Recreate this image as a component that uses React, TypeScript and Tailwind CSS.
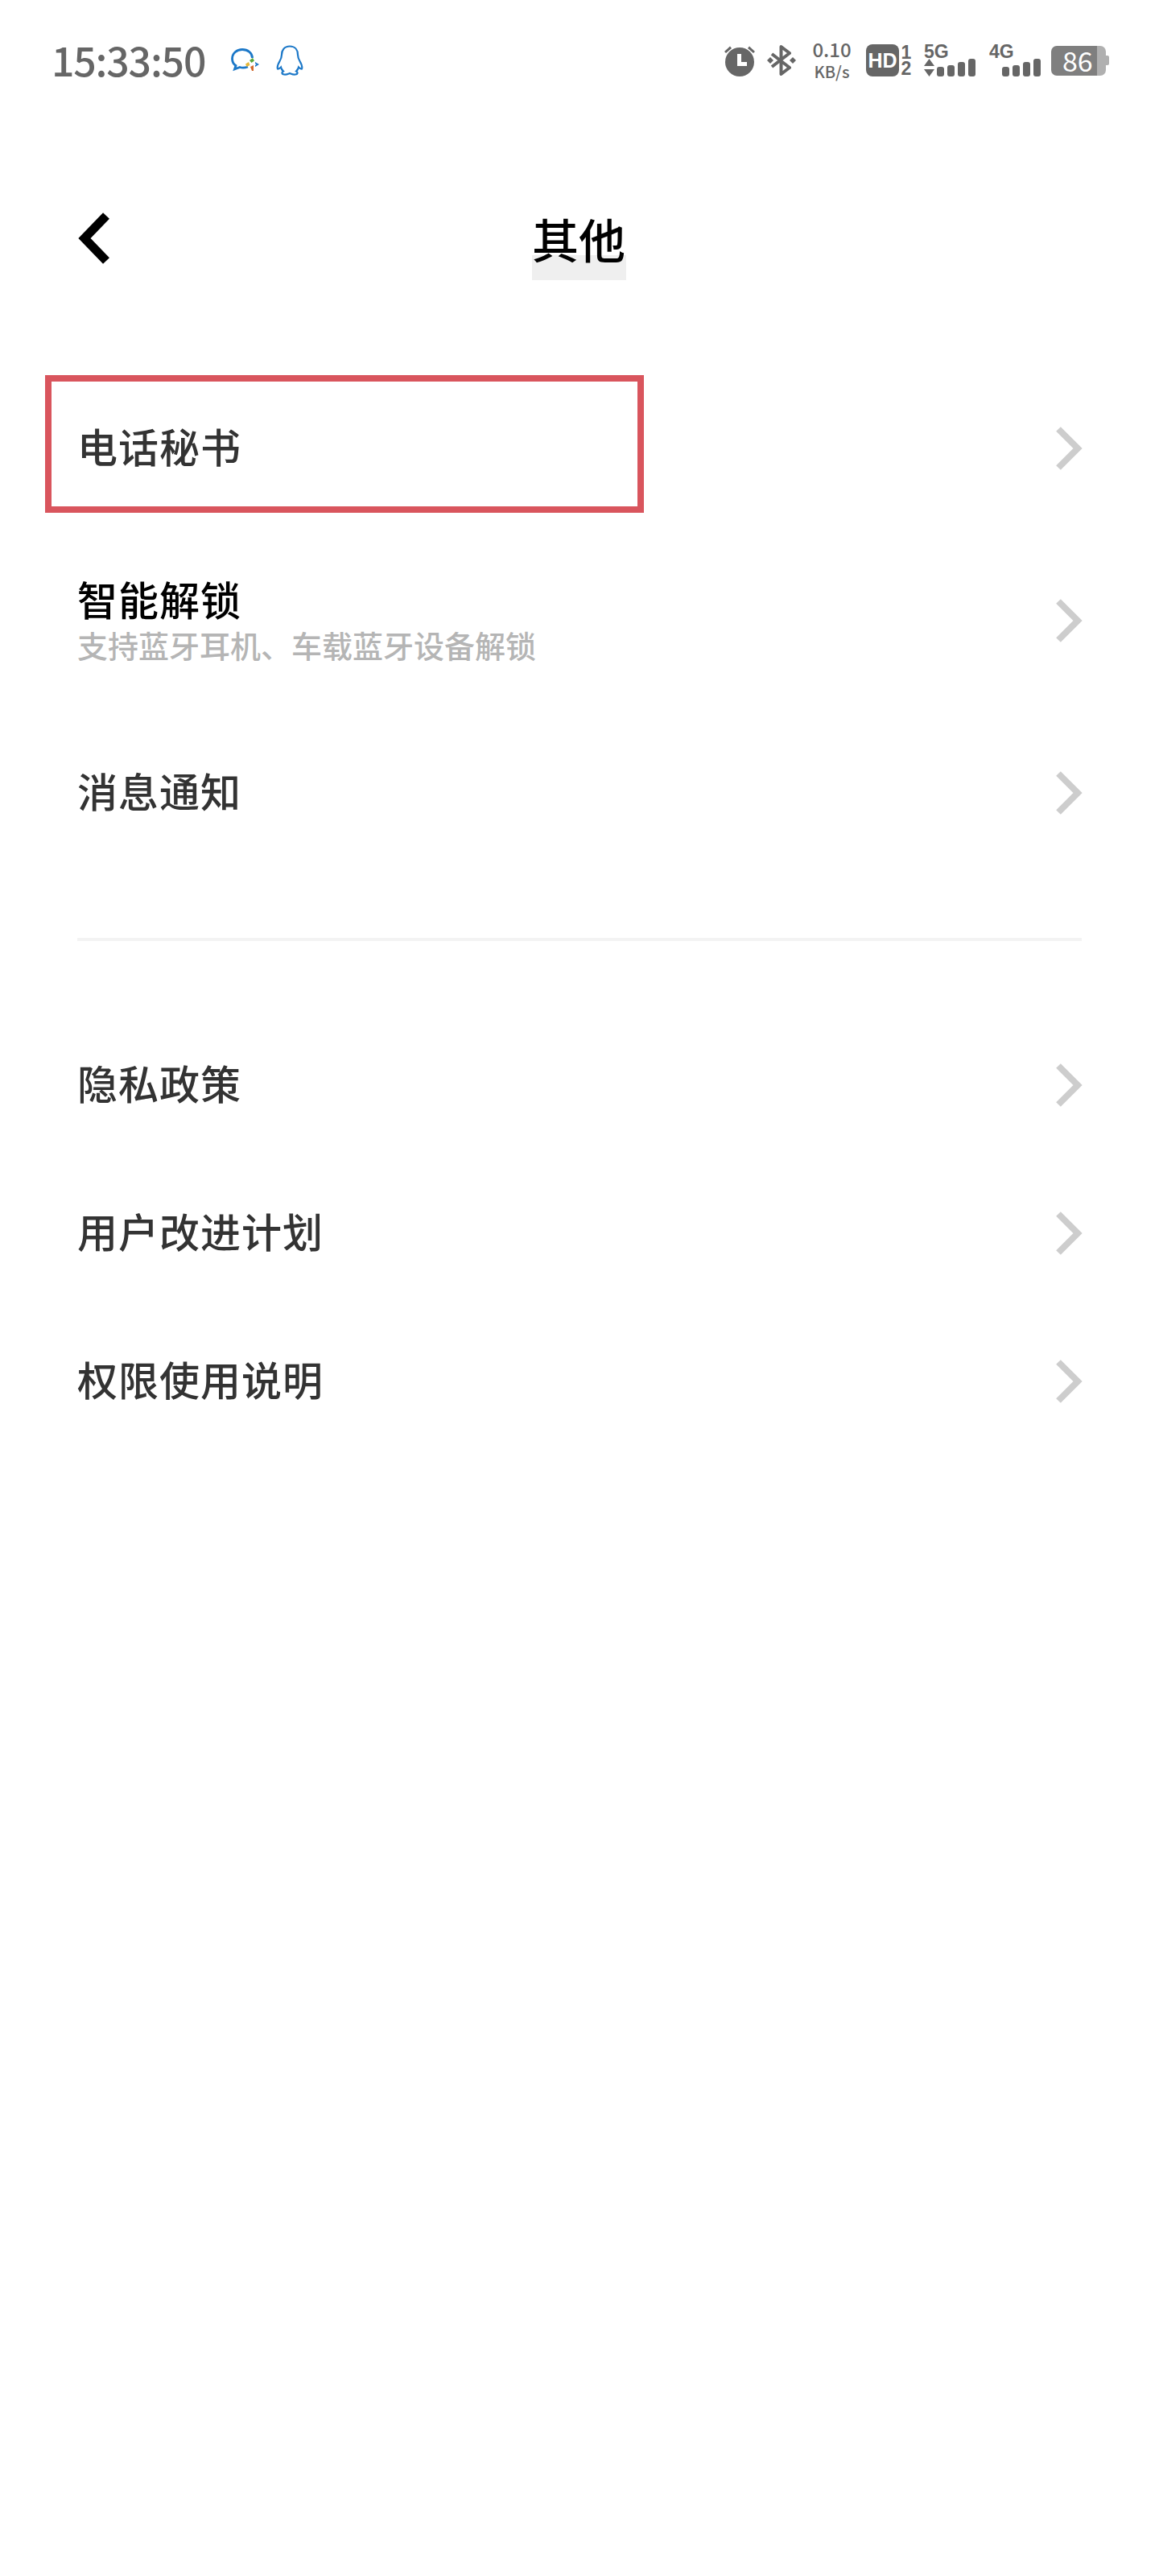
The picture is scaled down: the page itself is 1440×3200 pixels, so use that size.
import React from "react";

const cjk = "font-['Noto_Sans_CJK_SC','Noto_Sans',sans-serif]";

function Chevron() {
  return (
    <svg width="36" height="56" viewBox="0 0 36 56" className="shrink-0 relative top-[2px]" fill="none">
      <path d="M5 4 L29 28 L5 52" stroke="#cdcdcd" strokeWidth="8" />
    </svg>
  );
}

function Bars() {
  return (
    <div className="flex items-end gap-[4px]">
      <div className="w-[9px] h-[12px] rounded-[3px] bg-[#666]" />
      <div className="w-[9px] h-[14px] rounded-[3px] bg-[#666]" />
      <div className="w-[9px] h-[18px] rounded-[3px] bg-[#666]" />
      <div className="w-[9px] h-[22px] rounded-[3px] bg-[#666]" />
    </div>
  );
}

function Row({ title, sub, h, box, dark }: { title: string; sub?: string; h: string; box?: boolean; dark?: boolean }) {
  return (
    <div className={`relative flex items-center justify-between pl-[96px] pr-[94px] ${h}`}>
      <div className="flex flex-col">
        <div className={`text-[50px] leading-[60px] font-medium ${dark ? "text-black" : "text-[#333]"} tracking-[1px] -mt-[4px]`}>{title}</div>
        {sub && <div className="text-[38px] leading-[42px] mt-[7px] font-medium text-[#b5b5b5]">{sub}</div>}
      </div>
      <Chevron />
      {box && <div className="absolute left-[56px] top-[18px] w-[744px] h-[171px] border-[8px] border-[#d9555d]" />}
    </div>
  );
}

export default function App() {
  return (
    <div className={`w-[1440px] h-[3200px] bg-white overflow-hidden ${cjk}`}>
      {/* status bar */}
      <div className="h-[150px] flex items-center pl-[64px] pr-[62px]">
        <span className="text-[50px] leading-none text-[#666] tracking-[-1.2px] font-medium -mt-[4px]">15:33:50</span>
        <svg width="36" height="30" viewBox="0 0 36 30" className="ml-[32px]" fill="none">
          <path d="M21 23 C18 24 14 24.500 11 23.500 L4.500 26 L6 21.500 C3 19.500 1.500 16.500 1.500 13 C1.500 6.500 7 1.500 14 1.500 C21 1.500 26.500 6 26.500 12" stroke="#1c78c8" strokeWidth="2.800" />
          <path d="M18 19.500 L22 17 L23.500 21 L19.500 23 Z" fill="#e5b638" />
          <path d="M23 15 L27 12 L29 15.500 L25.500 18 Z" fill="#5aa83a" />
          <path d="M24 23 L28 21 L28 28 L26 28 Z" fill="#d2692d" />
          <path d="M30 17 L35 20 L30 23 L30 21 L31.500 20 L30 19 Z" fill="#1c78c8" />
        </svg>
        <svg width="34" height="38" viewBox="0 0 34 38" className="ml-[20px]" fill="none">
          <path d="M17 1.500 C10 1.500 7 6.500 7 12 C7 15 6.500 16.500 4.500 20 C2.500 23.500 1 27 2 29.500 C3.500 30 5 28.500 6 27.500 C6.500 30 8 31.500 9 32.500 C7 33.500 6.500 36 10 36.500 C13 37 15.500 35.500 17 35 C18.500 35.500 21 37 24 36.500 C27.500 36 27 33.500 25 32.500 C26 31.500 27.500 30 28 27.500 C29 28.500 30.500 30 32 29.500 C33 27 31.500 23.500 29.500 20 C27.500 16.500 27 15 27 12 C27 6.500 24 1.500 17 1.500 Z" stroke="#1c78c8" strokeWidth="2.200" />
        </svg>

        <div className="ml-auto flex items-center">
          <svg width="40" height="40" viewBox="0 0 40 40" fill="#666">
            <circle cx="20" cy="22" r="18" />
            <path d="M1 9 L8 2.500 L10 5 L3 11 Z M39 9 L32 2.500 L30 5 L37 11 Z" />
            <path d="M17 12 H22 V22 H29 V27 H17 Z" fill="#fff" />
          </svg>
          <svg width="38" height="38" viewBox="0 0 38 38" className="ml-[13px]" fill="none">
            <path d="M7 11 L29 28 L18.500 36 V2 L29 10 L7 27" stroke="#666" strokeWidth="4" strokeLinejoin="round" />
            <path d="M1 19 L5 15 L9 19 L5 23 Z M29 19 L33 15 L37 19 L33 23 Z" fill="#666" />
          </svg>
          <div className="ml-[19px] w-[49px] flex flex-col items-center font-medium text-[#666] -mt-[3px]">
            <span className="text-[24px] leading-[24px] whitespace-nowrap">0.10</span>
            <span className="text-[20px] leading-[20px] mt-[6px] whitespace-nowrap">KB/s</span>
          </div>
          <div className="ml-[18px] w-[41px] h-[40px] rounded-[8px] bg-[#666] flex items-center justify-center text-white text-[25px] leading-none font-['Liberation_Sans',sans-serif] font-bold">
            HD
          </div>
          <div className="ml-[2px] w-[14px] flex flex-col items-center font-['Liberation_Sans',sans-serif] font-bold text-[#666] text-[23px] leading-[20px]">
            <span>1</span>
            <span>2</span>
          </div>
          <div className="ml-[15px] w-[64px] h-[40px] flex flex-col justify-between">
            <span className="font-['Liberation_Sans',sans-serif] font-bold text-[#666] text-[23px] leading-[18px]">5G</span>
            <div className="flex items-end justify-between">
              <svg width="13" height="22" viewBox="0 0 13 22" fill="#666">
                <path d="M6.500 0 L13 9 H0 Z M0 13 H13 L6.500 22 Z" />
              </svg>
              <Bars />
            </div>
          </div>
          <div className="ml-[17px] w-[64px] h-[40px] flex flex-col justify-between">
            <span className="font-['Liberation_Sans',sans-serif] font-bold text-[#666] text-[23px] leading-[18px]">4G</span>
            <div className="self-end"><Bars /></div>
          </div>
          <div className="ml-[13px] flex items-center">
            <div className="w-[68px] h-[37px] rounded-[7px] bg-[linear-gradient(to_right,#7f7f7f_84%,#b0b0b0_84%)] flex items-center justify-start pl-[14px] text-white text-[34px] leading-none">
              86
            </div>
            <div className="w-[4px] h-[12px] rounded-r-[2px] bg-[#b0b0b0]" />
          </div>
        </div>
      </div>

      {/* header */}
      <div className="mt-[96px] h-[100px] flex items-center pl-[96px]">
        <svg width="42" height="66" viewBox="0 0 42 66" fill="none">
          <path d="M36 5 L9 33 L36 61" stroke="#000" strokeWidth="11" />
        </svg>
        <div className="relative ml-[523px] w-[117px] text-[58px] leading-[70px] text-black font-medium">
          <div className="absolute left-0 top-[56px] w-[117px] h-[31px] bg-[#efefef]" />
          <span className="relative">其他</span>
        </div>
      </div>

      {/* lists */}
      <div className="mt-[102px]">
        <Row title="电话秘书" h="h-[214px]" box />
        <Row title="智能解锁" sub="支持蓝牙耳机、车载蓝牙设备解锁" h="h-[214px]" dark />
        <Row title="消息通知" h="h-[214px]" />
      </div>
      <div className="mt-[75px] mx-[96px] h-[4px] bg-[#f3f3f3]" />
      <div className="mt-[85px]">
        <Row title="隐私政策" h="h-[184px]" />
        <Row title="用户改进计划" h="h-[184px]" />
        <Row title="权限使用说明" h="h-[184px]" />
      </div>
    </div>
  );
}
